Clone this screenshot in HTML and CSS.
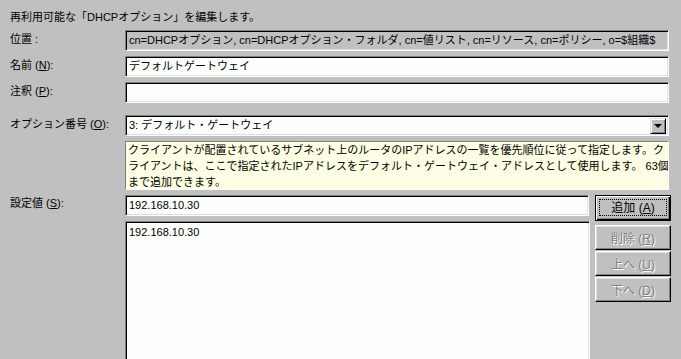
FILE: index.html
```html
<!DOCTYPE html>
<html lang="ja">
<head>
<meta charset="utf-8">
<title>DHCPオプションの編集</title>
<link rel="stylesheet" href="styles.css">
</head>
<body>
<div class="dialog">
  <div class="title">再利用可能な「DHCPオプション」を編集します。</div>
  <div class="form">
    <div class="label">位置 :</div>
    <div class="field readonly">cn=DHCPオプション, cn=DHCPオプション・フォルダ, cn=値リスト, cn=リソース, cn=ポリシー, o=$組織$</div>

    <div class="label">名前 (<u>N</u>):</div>
    <div class="field">デフォルトゲートウェイ</div>

    <div class="label">注釈 (<u>P</u>):</div>
    <div class="field"></div>

    <div class="label label-option">オプション番号 (<u>O</u>):</div>
    <div class="field select field-option">
      <span class="select-text">3: デフォルト・ゲートウェイ</span>
      <span class="drop-btn"><span class="tri"></span></span>
    </div>

    <div class="spacer"></div>
    <div class="info">クライアントが配置されているサブネット上のルータのIPアドレスの一覧を優先順位に従って指定します。ク<br>ライアントは、ここで指定されたIPアドレスをデフォルト・ゲートウェイ・アドレスとして使用します。 63個<br>まで追加できます。</div>

    <div class="label label-top">設定値 (<u>S</u>):</div>
    <div class="values">
      <div class="values-main">
        <div class="field field-value">192.168.10.30</div>
        <div class="listbox">192.168.10.30</div>
      </div>
      <div class="buttons">
        <div class="btn btn-default"><span class="focus">追加 (<u>A</u>)</span></div>
        <div class="btn-group">
          <div class="btn disabled"><span class="cap">削除 (<u>R</u>)</span></div>
          <div class="btn disabled"><span class="cap">上へ (<u>U</u>)</span></div>
          <div class="btn disabled"><span class="cap">下へ (<u>D</u>)</span></div>
        </div>
      </div>
    </div>
  </div>
</div>
</body>
</html>
```

FILE: styles.css
```css
html, body {
  margin: 0;
  padding: 0;
  background: #c0c0c0;
  overflow: hidden;
}

body {
  width: 681px;
  height: 359px;
  font-family: "Liberation Sans", "Noto Sans CJK JP", sans-serif;
  font-size: 11px;
  color: #000;
}

.dialog {
  padding: 9px 0 0 10px;
}

.title {
  line-height: 16px;
  height: 16px;
  margin-bottom: 5px;
}

.form {
  display: grid;
  grid-template-columns: 115px 545px;
  row-gap: 5px;
  align-items: center;
}

.label {
  line-height: 14px;
  padding-bottom: 3px;
  white-space: nowrap;
}

.label-option {
  margin-top: 7px;
}

.label-top {
  align-self: start;
  padding-top: 1px;
}

.field {
  box-sizing: border-box;
  width: 544px;
  height: 21px;
  background: #fcfefc;
  border: 1px solid;
  border-color: #808080 #fff #fff #808080;
  box-shadow: inset 1px 1px #000, inset -1px -1px #dfdfdf;
  padding: 0 3px;
  line-height: 19px;
  white-space: nowrap;
  overflow: hidden;
  font-size: 11px;
}

.readonly {
  background: #c0c0c0;
}

.field-option {
  margin-top: 7px;
}

.select {
  display: flex;
  align-items: center;
  justify-content: space-between;
  padding-right: 2px;
}

.drop-btn {
  box-sizing: border-box;
  width: 16px;
  height: 16px;
  background: #c0c0c0;
  border: 1px solid;
  border-color: #dfdfdf #000 #000 #dfdfdf;
  box-shadow: inset 1px 1px #fff, inset -1px -1px #808080;
  display: flex;
  align-items: center;
  justify-content: center;
}

.tri {
  width: 0;
  height: 0;
  border-left: 4px solid transparent;
  border-right: 4px solid transparent;
  border-top: 4px solid #000;
  margin-top: 1px;
}

.info {
  box-sizing: border-box;
  width: 544px;
  height: 49px;
  background: #fdfee3;
  border: 1px solid;
  border-color: #808080 #fff #fff #808080;
  padding: 0 2px;
  line-height: 16px;
  white-space: nowrap;
  overflow: hidden;
  letter-spacing: 0;
}

.values {
  display: flex;
  gap: 5px;
  align-items: flex-start;
}

.values-main {
  display: flex;
  flex-direction: column;
  gap: 5px;
}

.field-value {
  width: 464px;
}

.listbox {
  box-sizing: border-box;
  width: 465px;
  height: 138px;
  background: #fcfefc;
  border: 1px solid;
  border-bottom: 0;
  border-color: #808080 #fff #fff #808080;
  box-shadow: inset 1px 1px #000, inset -1px 0 #dfdfdf;
  padding: 3px 3px;
  line-height: 14px;
}

.buttons {
  display: flex;
  flex-direction: column;
  gap: 4px;
  width: 76px;
}

.btn-group {
  display: flex;
  flex-direction: column;
  gap: 1px;
}

.btn {
  box-sizing: border-box;
  width: 76px;
  height: 25px;
  background: #c0c0c0;
  border: 1px solid;
  border-color: #fff #000 #000 #fff;
  box-shadow: inset -1px -1px #808080, inset 1px 1px #dfdfdf;
  display: flex;
  align-items: center;
  justify-content: center;
}

.btn-default {
  height: 26px;
  border: 1px solid #000;
  box-shadow: inset 1px 1px #fff, inset -1px -1px #000, inset -2px -2px #808080;
  padding: 3px 3px 4px 3px;
  align-items: stretch;
  justify-content: stretch;
}

.focus {
  flex: 1;
  border: 1px dotted #000;
  display: flex;
  align-items: center;
  justify-content: center;
  font-size: 12px;
  line-height: 14px;
}

.disabled .cap {
  color: #808080;
  text-shadow: 1px 1px 0 #fff;
  font-size: 12px;
}

.spacer {
  height: 1px;
}
```
